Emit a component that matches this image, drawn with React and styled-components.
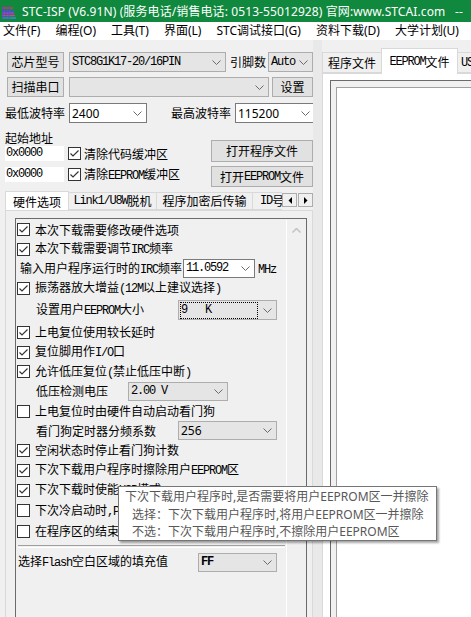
import React from "react";
import styled, { createGlobalStyle } from "styled-components";

const CJK = `"Noto Sans CJK SC", "Noto Sans", sans-serif`;
const UI = `"Noto Sans", "Noto Sans CJK SC", sans-serif`;
const MONO = `"Liberation Mono", "Noto Sans CJK SC", monospace`;

const GlobalStyle = createGlobalStyle`
  html, body { margin: 0; padding: 0; background: #f0f0f0; }
  body { font-family: ${UI}; font-size: 12px; color: #000; }
`;

const Window = styled.div`
  position: relative;
  width: 471px;
  height: 617px;
  overflow: hidden;
  background: #f0f0f0;
  display: flex;
  flex-direction: column;
  font-family: ${CJK};
  font-size: 12px;
`;

const TitleBar = styled.div`
  height: 22px;
  flex: none;
  background: #10893e;
  color: #fff;
  display: flex;
  align-items: center;
  gap: 5px;
  padding-left: 1px;
  white-space: pre;
  font-family: ${UI};
  font-size: 12px;
  letter-spacing: 0.1px;
`;

const MenuBar = styled.div`
  height: 18px;
  flex: none;
  background: #fff;
  display: flex;
  align-items: center;
  gap: 15px;
  padding-left: 3px;
  white-space: nowrap;
  font-family: ${UI};
`;

const MenuItem = styled.span`
  line-height: 18px;
`;

const Body = styled.div`
  flex: 1;
  display: flex;
  min-height: 0;
`;

const LeftPanel = styled.div`
  width: 313px;
  flex: none;
  display: flex;
  flex-direction: column;
`;

const Splitter = styled.div`
  width: 9px;
  flex: none;
  background: #e9e9e9;
`;

const RightPanel = styled.div`
  flex: 1;
  min-width: 0;
  display: flex;
  flex-direction: column;
  padding-top: 8px;
`;

const Row = styled.div`
  display: flex;
  align-items: center;
  flex: none;
  height: ${(p) => p.$h ?? 20}px;
  margin-top: ${(p) => p.$mt ?? 0}px;
  padding-left: ${(p) => p.$pl ?? 0}px;
  white-space: nowrap;
`;

const Button = styled.div`
  box-sizing: border-box;
  flex: none;
  width: ${(p) => p.$w}px;
  height: ${(p) => p.$h ?? 20}px;
  margin-left: ${(p) => p.$ml ?? 0}px;
  margin-top: ${(p) => p.$mt ?? 0}px;
  background: #e1e1e1;
  border: 1px solid #adadad;
  display: flex;
  align-items: center;
  justify-content: center;
  white-space: nowrap;
  font-size: 12px;
  line-height: 16px;
`;

const Label = styled.span`
  flex: none;
  width: ${(p) => (p.$w ? `${p.$w}px` : "auto")};
  margin-left: ${(p) => p.$ml ?? 0}px;
  white-space: nowrap;
  line-height: 16px;
`;

const Combo = styled.div`
  box-sizing: border-box;
  flex: none;
  width: ${(p) => p.$w}px;
  height: ${(p) => p.$h ?? 20}px;
  margin-left: ${(p) => p.$ml ?? 0}px;
  background: ${(p) => (p.$edit ? "#ffffff" : "#e5e5e5")};
  border: 1px solid ${(p) => (p.$edit ? "#7a7a7a" : "#adadad")};
  display: flex;
  align-items: center;
  padding-left: 2px;
`;

const ComboText = styled.span`
  flex: 1;
  min-width: 0;
  white-space: pre;
  line-height: 15px;
  font-family: ${(p) => (p.$sans ? UI : MONO)};
  font-size: 12px;
  letter-spacing: ${(p) => (p.$sans ? 0 : -1.2)}px;
  font-weight: ${(p) => (p.$bold ? 700 : 400)};
  ${(p) => p.$focus && `outline: 1px dotted #000; margin-right: 2px;`}
`;

const ComboArrow = styled.span`
  flex: none;
  width: 17px;
  display: flex;
  align-items: center;
  justify-content: center;
`;

const M = styled.span`
  font-family: ${MONO};
  font-size: 12px;
  letter-spacing: -1.2px;
`;

const TextBox = styled.div`
  box-sizing: border-box;
  flex: none;
  width: 59px;
  height: 15px;
  background: #fff;
  display: flex;
  align-items: center;
  padding-left: 1px;
  line-height: 15px;
`;

const CheckBox = styled.span`
  box-sizing: border-box;
  flex: none;
  width: 13px;
  height: 13px;
  margin-left: ${(p) => p.$ml ?? 0}px;
  border: 1px solid #333;
  background: #fff;
  display: flex;
  align-items: center;
  justify-content: center;
`;

const CheckText = styled.span`
  margin-left: ${(p) => p.$ml ?? 5}px;
  line-height: 16px;
  white-space: nowrap;
`;

const AddrSection = styled.div`
  display: flex;
  flex: none;
  margin-top: 7px;
  padding-left: 5px;
`;

const AddrCol = styled.div`
  width: 207px;
  display: flex;
  flex-direction: column;
`;

const BtnCol = styled.div`
  display: flex;
  flex-direction: column;
  padding-top: 10px;
`;

const TabStrip = styled.div`
  display: flex;
  align-items: flex-end;
  flex: none;
  height: 20px;
  margin-top: 3px;
  padding-left: 5px;
  position: relative;
  z-index: 1;
`;

const TabViewport = styled.div`
  display: flex;
  align-items: flex-end;
  overflow: hidden;
  width: 278px;
  height: 20px;
`;

const Tab = styled.div`
  box-sizing: border-box;
  flex: none;
  width: ${(p) => p.$w}px;
  height: ${(p) => (p.$active ? 20 : 18)}px;
  margin-bottom: ${(p) => (p.$active ? -1 : 0)}px;
  background: ${(p) => (p.$active ? "#ffffff" : "#f0f0f0")};
  border: 1px solid #d9d9d9;
  border-bottom: ${(p) => (p.$active ? "none" : "1px solid #d9d9d9")};
  margin-right: -1px;
  display: flex;
  align-items: center;
  justify-content: center;
  white-space: nowrap;
  line-height: 16px;
`;

const ScrollBtns = styled.div`
  display: flex;
  gap: 1px;
  align-self: center;
`;

const ScrollBtn = styled.div`
  box-sizing: border-box;
  width: 15px;
  height: 14px;
  background: #f0f0f0;
  border: 1px solid #adadad;
  display: flex;
  align-items: center;
  justify-content: center;
`;

const Pane = styled.div`
  flex: 1;
  min-height: 0;
  margin-left: 5px;
  box-sizing: border-box;
  border-left: 1px solid #d9d9d9;
  border-top: 1px solid #d9d9d9;
  border-right: 1px solid #d9d9d9;
  background: #f0f0f0;
  padding: 7px 5px 0 9px;
  display: flex;
`;

const InnerBox = styled.div`
  flex: 1;
  display: flex;
  border: 1px solid #6b6b6b;
  border-bottom: none;
  background: #f0f0f0;
`;

const Content = styled.div`
  flex: 1;
  min-width: 0;
  display: flex;
  flex-direction: column;
  padding-top: 1px;
`;

const VScroll = styled.div`
  width: 19px;
  flex: none;
  border-left: 1px solid #ffffff;
  background: #f0f0f0;
  display: flex;
  justify-content: center;
  padding-top: 8px;
  margin-top: 1px;
`;

const Separator = styled.div`
  flex: none;
  margin: 4px 0 0 2px;
  width: 267px;
  height: 1px;
  border-top: 1px solid #a0a0a0;
  border-bottom: 1px solid #ffffff;
`;

const RTabStrip = styled.div`
  display: flex;
  align-items: flex-end;
  height: 25px;
  flex: none;
  position: relative;
  z-index: 1;
`;

const RTab = styled.div`
  box-sizing: border-box;
  flex: none;
  width: ${(p) => p.$w}px;
  height: ${(p) => (p.$active ? 26 : 21)}px;
  margin-bottom: ${(p) => (p.$active ? -1 : 0)}px;
  background: ${(p) => (p.$active ? "#ffffff" : "#f0f0f0")};
  border: 1px solid #d9d9d9;
  border-bottom: ${(p) => (p.$active ? "none" : "1px solid #d9d9d9")};
  margin-right: -1px;
  display: flex;
  align-items: center;
  justify-content: ${(p) => (p.$clip ? "flex-start" : "center")};
  padding-left: ${(p) => (p.$clip ? 3 : 0)}px;
  overflow: hidden;
  white-space: nowrap;
  font-size: 12px;
  line-height: 16px;
`;

const RPane = styled.div`
  flex: 1;
  background: #ffffff;
  border-top: 1px solid #d9d9d9;
  border-left: 1px solid #d9d9d9;
  padding: 6px 0 0 7px;
  display: flex;
`;

const Frame = styled.div`
  flex: 1;
  display: flex;
  border-top: 1px solid #6b6b6b;
  border-left: 1px solid #6b6b6b;
  background: #f0f0f0;
  padding: 6px 0 0 5px;
`;

const FrameInner = styled.div`
  flex: 1;
  background: #ffffff;
  border-top: 1px solid #a0a0a0;
  border-left: 1px solid #a0a0a0;
`;

const Tooltip = styled.div`
  position: absolute;
  left: 118px;
  top: 486px;
  width: 319px;
  height: 55px;
  box-sizing: border-box;
  background: #ffffff;
  border: 1px solid #767676;
  box-shadow: 2px 2px 2px rgba(0, 0, 0, 0.35);
  padding: 1px 0 0 6px;
  color: #575757;
  font-family: ${UI};
  font-size: 12px;
  z-index: 5;
`;

const TipLine = styled.div`
  line-height: 17.5px;
  white-space: nowrap;
  padding-left: ${(p) => (p.$indent ? 7 : 0)}px;
`;

const Chevron = () => (
  <svg width="9" height="5" viewBox="0 0 9 5">
    <polyline points="0.5,0.5 4.5,4.5 8.5,0.5" fill="none" stroke="#6a6a6a" strokeWidth="1" />
  </svg>
);

const Check = () => (
  <svg width="11" height="11" viewBox="0 0 11 11">
    <polyline points="1.5,5.5 4,8 9.5,2.5" fill="none" stroke="#333" strokeWidth="1.2" />
  </svg>
);

const TitleIcon = () => (
  <svg width="16" height="16" viewBox="0 0 16 16">
    <path d="M1 5 L12 5" stroke="#e23b3b" strokeWidth="1.4" />
    <path d="M1 7.5 L13 7.5" stroke="#3b57e2" strokeWidth="1.4" />
    <path d="M1 10 L13 10" stroke="#b23be2" strokeWidth="1.4" />
    <path d="M1 12.5 L14 12.5" stroke="#e23b9e" strokeWidth="1.4" />
    <path d="M1 15 L15 15" stroke="#3b8be2" strokeWidth="1.4" />
    <path d="M2 3 L2 16 M5 3 L5 16 M8 3 L8 16" stroke="#6b3be2" strokeWidth="0.8" />
  </svg>
);

const TriLeft = () => (
  <svg width="4" height="7" viewBox="0 0 4 7">
    <polygon points="4,0 4,7 0.5,3.5" fill="#000" />
  </svg>
);
const TriRight = () => (
  <svg width="4" height="7" viewBox="0 0 4 7">
    <polygon points="0,0 0,7 3.5,3.5" fill="#000" />
  </svg>
);
const ChevUp = () => (
  <svg width="9" height="5" viewBox="0 0 9 5">
    <polyline points="0.5,4.5 4.5,0.5 8.5,4.5" fill="none" stroke="#c2c2c2" strokeWidth="1.5" />
  </svg>
);

const ComboBox = ({ w, h, ml, edit, text, sans, bold, focus }) => (
  <Combo $w={w} $h={h} $ml={ml} $edit={edit}>
    <ComboText $sans={sans} $bold={bold} $focus={focus}>{text}</ComboText>
    <ComboArrow>
      <Chevron />
    </ComboArrow>
  </Combo>
);

const CheckRow = ({ h, checked = true, children }) => (
  <Row $h={h} $pl={1}>
    <CheckBox>{checked && <Check />}</CheckBox>
    <CheckText>{children}</CheckText>
  </Row>
);

export default function App() {
  return (
    <>
      <GlobalStyle />
      <Window>
        <TitleBar>
          <TitleIcon />
          <span>STC-ISP (V6.91N) (服务电话/销售电话: 0513-55012928) 官网:www.STCAI.com   --</span>
        </TitleBar>
        <MenuBar>
          <MenuItem>文件(F)</MenuItem>
          <MenuItem>编程(O)</MenuItem>
          <MenuItem>工具(T)</MenuItem>
          <MenuItem>界面(L)</MenuItem>
          <MenuItem>STC调试接口(G)</MenuItem>
          <MenuItem>资料下载(D)</MenuItem>
          <MenuItem>大学计划(U)</MenuItem>
        </MenuBar>
        <Body>
          <LeftPanel>
            <Row $mt={12} $pl={7}>
              <Button $w={57}>芯片型号</Button>
              <ComboBox w={157} ml={5} text="STC8G1K17-20/16PIN" />
              <Label $ml={4}>引脚数</Label>
              <ComboBox w={45} ml={2} text="Auto" />
            </Row>
            <Row $mt={5} $pl={7}>
              <Button $w={57}>扫描串口</Button>
              <ComboBox w={200} ml={5} text="" />
              <Button $w={41} $ml={3}>设置</Button>
            </Row>
            <Row $mt={6} $pl={5}>
              <Label $w={64}>最低波特率</Label>
              <ComboBox w={78} edit text="2400" sans />
              <Label $ml={24} $w={64}>最高波特率</Label>
              <ComboBox w={80} edit text="115200" sans />
            </Row>
            <AddrSection>
              <AddrCol>
                <Label>起始地址</Label>
                <Row $h={15}>
                  <TextBox><M>0x0000</M></TextBox>
                  <CheckBox $ml={4}><Check /></CheckBox>
                  <CheckText $ml={3}>清除代码缓冲区</CheckText>
                </Row>
                <Row $h={15} $mt={6}>
                  <TextBox><M>0x0000</M></TextBox>
                  <CheckBox $ml={4}><Check /></CheckBox>
                  <CheckText $ml={3}>清除<M>EEPROM</M>缓冲区</CheckText>
                </Row>
              </AddrCol>
              <BtnCol>
                <Button $w={102} $h={22}>打开程序文件</Button>
                <Button $w={102} $h={21} $mt={4}>打开<M>EEPROM</M>文件</Button>
              </BtnCol>
            </AddrSection>
            <TabStrip>
              <TabViewport>
                <Tab $w={64} $active>硬件选项</Tab>
                <Tab $w={89}><M>Link1/U8W</M>脱机</Tab>
                <Tab $w={97}>程序加密后传输</Tab>
                <Tab $w={40}><M>ID</M>号</Tab>
              </TabViewport>
              <ScrollBtns>
                <ScrollBtn><TriLeft /></ScrollBtn>
                <ScrollBtn><TriRight /></ScrollBtn>
              </ScrollBtns>
            </TabStrip>
            <Pane>
              <InnerBox>
                <Content>
                  <CheckRow h={19}>本次下载需要修改硬件选项</CheckRow>
                  <CheckRow h={20}>本次下载需要调节<M>IRC</M>频率</CheckRow>
                  <Row $h={19} $pl={4}>
                    <Label>输入用户程序运行时的<M>IRC</M>频率</Label>
                    <ComboBox w={72} h={19} ml={1} edit text="11.0592" />
                    <Label $ml={3}><M>MHz</M></Label>
                  </Row>
                  <CheckRow h={20}>振荡器放大增益<M>(12M</M>以上建议选择<M>)</M></CheckRow>
                  <Row $h={24} $pl={20}>
                    <Label $w={142}>设置用户<M>EEPROM</M>大小</Label>
                    <ComboBox w={99} h={20} text="9   K" focus />
                  </Row>
                  <CheckRow h={20}>上电复位使用较长延时</CheckRow>
                  <CheckRow h={20}>复位脚用作<M>I/O</M>口</CheckRow>
                  <CheckRow h={19}>允许低压复位<M>(</M>禁止低压中断<M>)</M></CheckRow>
                  <Row $h={20} $pl={20}>
                    <Label $w={92}>低压检测电压</Label>
                    <ComboBox w={100} h={19} text="2.00 V" />
                  </Row>
                  <CheckRow h={20} checked={false}>上电复位时由硬件自动启动看门狗</CheckRow>
                  <Row $h={19} $pl={20}>
                    <Label $w={142}>看门狗定时器分频系数</Label>
                    <ComboBox w={99} h={19} text="256" sans />
                  </Row>
                  <CheckRow h={20}>空闲状态时停止看门狗计数</CheckRow>
                  <CheckRow h={20}>下次下载用户程序时擦除用户<M>EEPROM</M>区</CheckRow>
                  <CheckRow h={20}>下次下载时使能<M>USB</M>模式</CheckRow>
                  <CheckRow h={21} checked={false}>下次冷启动时<M>,P3.2</M></CheckRow>
                  <CheckRow h={20} checked={false}>在程序区的结束处</CheckRow>
                  <Separator />
                  <Row $h={20} $mt={4} $pl={2}>
                    <Label $w={180}>选择<M>Flash</M>空白区域的填充值</Label>
                    <ComboBox w={79} h={19} text="FF" bold />
                  </Row>
                </Content>
                <VScroll>
                  <ChevUp />
                </VScroll>
              </InnerBox>
            </Pane>
          </LeftPanel>
          <Splitter />
          <RightPanel>
            <RTabStrip>
              <RTab $w={60}>程序文件</RTab>
              <RTab $w={77} $active><M>EEPROM</M>文件</RTab>
              <RTab $w={30} $clip><M>USB</M></RTab>
            </RTabStrip>
            <RPane>
              <Frame>
                <FrameInner />
              </Frame>
            </RPane>
          </RightPanel>
        </Body>
        <Tooltip>
          <TipLine>下次下载用户程序时,是否需要将用户EEPROM区一并擦除</TipLine>
          <TipLine $indent>选择：下次下载用户程序时,将用户EEPROM区一并擦除</TipLine>
          <TipLine $indent>不选：下次下载用户程序时,不擦除用户EEPROM区</TipLine>
        </Tooltip>
      </Window>
    </>
  );
}
